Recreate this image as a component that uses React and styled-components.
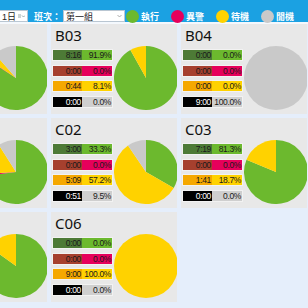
import React from 'react';
import styled, { createGlobalStyle } from 'styled-components';

const GlobalStyle = createGlobalStyle`
  html, body {
    margin: 0;
    padding: 0;
    background: #e5eefb;
    overflow: hidden;
  }
  body {
    font-family: "Liberation Sans", "Noto Sans CJK TC", sans-serif;
  }
`;

const Page = styled.div`
  width: 308px;
  height: 308px;
  overflow: hidden;
  background: #e5eefb;
`;

const Header = styled.div`
  height: 24px;
  box-sizing: border-box;
  padding-top: 10px;
  background: #1ba1e2;
  border-bottom: 2px solid #f4f8fd;
  display: flex;
  align-items: center;
  white-space: nowrap;
`;

const Select = styled.div`
  height: 12px;
  box-sizing: border-box;
  width: ${p => p.w}px;
  flex: none;
  margin-left: ${p => p.ml || 0}px;
  background: #fff;
  border: 1px solid #b9c6d2;
  display: flex;
  align-items: center;
  justify-content: space-between;
  padding: 0 2px;
  font-size: 9px;
  color: #222;
  font-family: "Liberation Sans", "Noto Sans CJK TC", sans-serif;
`;

const Label = styled.span`
  color: #fff;
  font-size: 9px;
  font-weight: 700;
  margin: 0 2px 0 ${p => p.ml || 0}px;
  font-family: "Noto Sans CJK TC", sans-serif;
`;

const Legend = styled.div`
  display: flex;
  align-items: center;
  flex: none;
  margin-left: ${p => p.ml}px;
`;

const Dot = styled.span`
  width: 13px;
  height: 13px;
  border-radius: 50%;
  background: ${p => p.color};
  margin-right: 1px;
`;

const Grid = styled.div`
  margin-left: -79px;
  display: grid;
  grid-template-columns: repeat(3, 126px);
  grid-auto-rows: 90px;
  gap: 4px;
`;

const Card = styled.div`
  background: #e8e8e8;
  display: flex;
  padding-left: 1px;
  overflow: hidden;
`;

const LeftCol = styled.div`
  width: 61px;
  flex: none;
  display: flex;
  flex-direction: column;
`;

const Title = styled.div`
  height: 25px;
  box-sizing: border-box;
  padding: 1px 0 0 3px;
  font-family: "Noto Sans", sans-serif;
  font-size: 15px;
  line-height: 20px;
  color: #111;
`;

const Stats = styled.div`
  display: flex;
  flex-direction: column;
  gap: 3.5px;
`;

const StatRow = styled.div`
  display: flex;
  height: 12px;
  box-sizing: border-box;
  border: 1px solid #f2f2f2;
`;

const Cell = styled.div`
  width: ${p => p.w}px;
  background: ${p => p.bg};
  color: ${p => p.fg || '#1a1a1a'};
  font-size: 8.5px;
  line-height: 10px;
  text-align: right;
  padding-right: 1px;
  box-sizing: border-box;
  letter-spacing: -0.35px;
`;

const PieBox = styled.svg`
  flex: none;
  align-self: flex-end;
  margin: 0 0 4px 1px;
`;

const COLORS = {
  run: ['#4d7a36', '#6cb92e'],
  alarm: ['#a6402e', '#e6005b'],
  idle: ['#f5a800', '#ffd200'],
  off: ['#000000', '#cfcfcf'],
};
const PIE = ['#6cb92e', '#e6005b', '#ffd200', '#c9c9c9'];

const cards = [
  { name: 'B02', stats: [['7:33', 84], ['0:03', 0.5], ['0:22', 4], ['1:02', 11.5]] },
  { name: 'B03', stats: [['8:16', 91.9], ['0:00', 0], ['0:44', 8.1], ['0:00', 0]] },
  { name: 'B04', stats: [['0:00', 0], ['0:00', 0], ['0:00', 0], ['9:00', 100]] },
  { name: 'C01', stats: [['6:34', 73], ['0:05', 1], ['1:32', 17], ['0:49', 9]] },
  { name: 'C02', stats: [['3:00', 33.3], ['0:00', 0], ['5:09', 57.2], ['0:51', 9.5]] },
  { name: 'C03', stats: [['7:19', 81.3], ['0:00', 0], ['1:41', 18.7], ['0:00', 0]] },
  { name: 'C05', stats: [['7:39', 85], ['0:00', 0], ['1:21', 15], ['0:00', 0]] },
  { name: 'C06', stats: [['0:00', 0], ['0:00', 0], ['9:00', 100], ['0:00', 0]] },
];

function Pie({ values }) {
  const r = 32, c = 32;
  const total = values.reduce((a, b) => a + b, 0) || 1;
  let start = 0;
  const parts = values.map((v, i) => {
    const frac = v / total;
    if (frac <= 0) return null;
    if (frac >= 0.9999) return <circle key={i} cx={c} cy={c} r={r} fill={PIE[i]} />;
    const a0 = start * 2 * Math.PI - Math.PI / 2;
    start += frac;
    const a1 = start * 2 * Math.PI - Math.PI / 2;
    const large = frac > 0.5 ? 1 : 0;
    const d = `M${c},${c} L${c + r * Math.cos(a0)},${c + r * Math.sin(a0)} A${r},${r} 0 ${large} 1 ${c + r * Math.cos(a1)},${c + r * Math.sin(a1)} Z`;
    return <path key={i} d={d} fill={PIE[i]} />;
  });
  return (
    <PieBox width="64" height="64" viewBox="0 0 64 64">
      {parts}
    </PieBox>
  );
}

const keys = ['run', 'alarm', 'idle', 'off'];

function MachineCard({ m }) {
  return (
    <Card>
      <LeftCol>
        <Title>{m.name}</Title>
        <Stats>
          {m.stats.map(([t, p], i) => (
            <StatRow key={i}>
              <Cell w={29} bg={COLORS[keys[i]][0]} fg={i === 3 ? '#fff' : undefined}>{t}</Cell>
              <Cell w={30} bg={COLORS[keys[i]][1]}>{p.toFixed(1)}%</Cell>
            </StatRow>
          ))}
        </Stats>
      </LeftCol>
      <Pie values={m.stats.map(s => s[1])} />
    </Card>
  );
}

export default function App() {
  return (
    <Page>
      <GlobalStyle />
      <Header>
        <Select w={29} ml={-1}>
          <span>1日</span>
          <svg width="7" height="5" viewBox="0 0 7 5">
            <path d="M0 1h3M0 3h3" stroke="#9aa" strokeWidth="1" />
            <path d="M4 1.5l1.5 1.5 1.5-1.5" stroke="#9aa" strokeWidth="1" fill="none" />
          </svg>
        </Select>
        <Label ml={6}>班次：</Label>
        <Select w={62}>
          <span>第一組</span>
          <svg width="5" height="4" viewBox="0 0 5 4">
            <path d="M0.5 1l2 2 2-2" stroke="#999" strokeWidth="0.8" fill="none" />
          </svg>
        </Select>
        <Legend ml={1}><Dot color="#6cb92e" /><Label ml={1}>執行</Label></Legend>
        <Legend ml={10}><Dot color="#e6005b" /><Label ml={1}>異警</Label></Legend>
        <Legend ml={10}><Dot color="#ffd200" /><Label ml={1}>待機</Label></Legend>
        <Legend ml={10}><Dot color="#c9c9c9" /><Label ml={1}>閒機</Label></Legend>
      </Header>
      <Grid>
        {cards.map(m => <MachineCard key={m.name} m={m} />)}
      </Grid>
    </Page>
  );
}
